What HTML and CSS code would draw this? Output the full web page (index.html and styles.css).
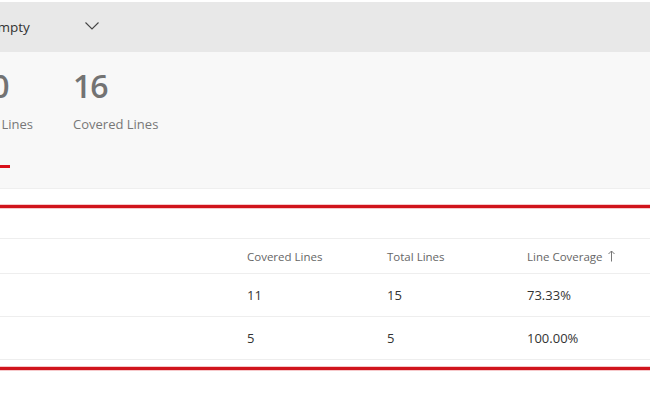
FILE: index.html
```html
<!DOCTYPE html>
<html lang="en">
<head>
<meta charset="utf-8">
<title>Code Coverage</title>
<link rel="stylesheet" href="styles.css">
</head>
<body>
<div class="page">
  <header class="toolbar">
    <div class="dropdown">
      <span class="dropdown-text">Empty</span>
      <svg class="chevron" width="14" height="8" viewBox="0 0 14 8" aria-hidden="true"><polyline points="0.5,0.5 7,7 13.5,0.5" fill="none" stroke="#444" stroke-width="1.1"/></svg>
    </div>
  </header>
  <section class="summary">
    <div class="stats">
      <div class="stat stat-first">
        <div class="stat-num">20</div>
        <div class="stat-label">Total Lines</div>
      </div>
      <div class="stat">
        <div class="stat-num">16</div>
        <div class="stat-label">Covered Lines</div>
      </div>
    </div>
    <div class="tab-underline"></div>
  </section>
  <section class="details">
    <div class="grid">
      <div class="row head">
        <div class="cell name">File</div>
        <div class="cell">Covered Lines</div>
        <div class="cell">Total Lines</div>
        <div class="cell sort">Line Coverage <svg class="arrow" width="7" height="12" viewBox="0 0 7 12" aria-hidden="true"><path d="M3.5 11.5V1M0.5 4L3.5 1L6.5 4" fill="none" stroke="#777" stroke-width="1"/></svg></div>
      </div>
      <div class="row">
        <div class="cell name">Program.cs</div>
        <div class="cell">11</div>
        <div class="cell">15</div>
        <div class="cell">73.33%</div>
      </div>
      <div class="row">
        <div class="cell name">Helper.cs</div>
        <div class="cell">5</div>
        <div class="cell">5</div>
        <div class="cell">100.00%</div>
      </div>
    </div>
  </section>
</div>
</body>
</html>
```
FILE: styles.css
```css
html, body {
  margin: 0;
  padding: 0;
  background: #ffffff;
  overflow: hidden;
}
body {
  font-family: "Open Sans", "Noto Sans", sans-serif;
  color: #333333;
}
.page {
  width: 650px;
  height: 400px;
  padding-top: 2px;
  box-sizing: border-box;
  overflow: hidden;
}
.toolbar {
  height: 50px;
  background: #e8e8e8;
  display: flex;
  align-items: center;
}
.dropdown {
  display: flex;
  align-items: center;
  margin-left: -10px;
}
.dropdown-text {
  font-size: 13.5px;
  color: #333;
  width: 95px;
}
.chevron {
  display: block;
  margin-top: -3px;
}
.summary {
  background: #f8f8f8;
  border-bottom: 1px solid #efefef;
  padding-top: 14px;
  box-sizing: border-box;
  height: 137px;
}
.stats {
  display: flex;
  gap: 40px;
  margin-left: -32px;
}
.stat {
  display: flex;
  flex-direction: column;
}
.stat-num {
  font-size: 32px;
  line-height: 40px;
  font-weight: 600;
  color: #737373;
  letter-spacing: -1px;
}
.stat-label {
  margin-top: 8px;
  font-size: 13px;
  line-height: 20px;
  color: #777;
}
.stat-first .stat-num {
  margin-left: 6px;
}
.tab-underline {
  width: 60px;
  height: 3px;
  background: #d9101a;
  margin-left: -50px;
  margin-top: 31px;
}
.details {
  margin-top: 16px;
  border-top: 3px solid #d0141c;
  border-bottom: 3px solid #d0141c;
  box-shadow: 0 -1px 0 #f6c9cb, 0 1px 0 #f6c9cb, inset 0 1px 0 #f6c9cb, inset 0 -1px 0 #f6c9cb;
  padding-top: 30px;
  padding-bottom: 7px;
}
.grid {
  display: flex;
  flex-direction: column;
}
.row {
  display: grid;
  grid-template-columns: 247px 140px 140px 1fr;
  align-items: center;
  height: 43px;
  box-sizing: border-box;
  border-bottom: 1px solid #eeeeee;
  font-size: 13px;
  color: #333;
}
.row.head {
  height: 36px;
  border-top: 1px solid #eeeeee;
  font-size: 11.5px;
  color: #666;
}
.cell.name {
  visibility: hidden;
}
.sort {
  display: flex;
  align-items: center;
  gap: 5px;
}
.arrow {
  display: block;
}
```
